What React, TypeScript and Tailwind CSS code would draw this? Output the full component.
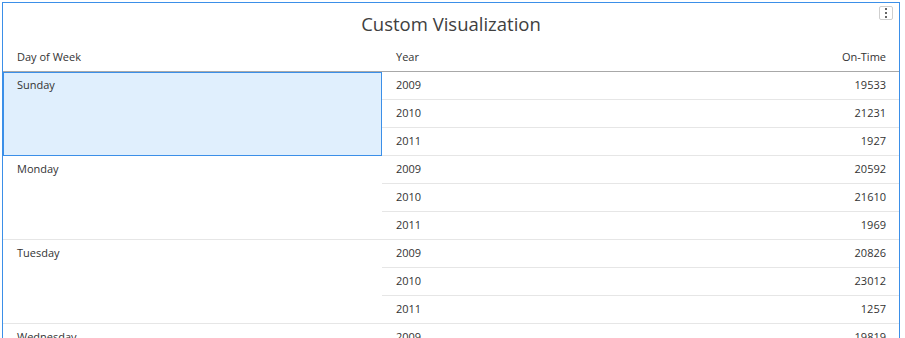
import React from "react";

type Group = { day: string; rows: [string, number][] };

const groups: Group[] = [
  { day: "Sunday", rows: [["2009", 19533], ["2010", 21231], ["2011", 1927]] },
  { day: "Monday", rows: [["2009", 20592], ["2010", 21610], ["2011", 1969]] },
  { day: "Tuesday", rows: [["2009", 20826], ["2010", 23012], ["2011", 1257]] },
  { day: "Wednesday", rows: [["2009", 19819], ["2010", 22141], ["2011", 1893]] },
];

export default function App() {
  return (
    <div className="w-[905px] h-[338px] bg-white overflow-hidden pt-[2px] pl-[2px]" style={{ fontFamily: "'Open Sans', 'Noto Sans', sans-serif" }}>
      <div className="relative w-[898px] h-[340px] border border-[#3b8fe8] bg-white overflow-hidden text-[#333]">
        {/* title */}
        <div className="h-[41px] flex items-center justify-center text-[18.5px] text-[#404040]">
          Custom Visualization
        </div>
        <button className="absolute top-[3px] right-[6px] w-[14px] h-[14px] border border-[#cfcfcf] rounded-[2px] bg-white flex flex-col items-center justify-center gap-[2px]">
          <span className="w-[2px] h-[2px] bg-[#666]" />
          <span className="w-[2px] h-[2px] bg-[#666]" />
          <span className="w-[2px] h-[2px] bg-[#666]" />
        </button>

        {/* header */}
        <div className="flex h-[28px] border-b border-[#a8a8a8] text-[11px] font-medium text-[#333]">
          <div className="w-[379px] pl-[14px] flex items-center">Day of Week</div>
          <div className="flex-1 pl-[14px] flex items-center">Year</div>
          <div className="pr-[13px] flex items-center">On-Time</div>
        </div>

        {/* body */}
        {groups.map((g, gi) => (
          <div key={g.day} className="flex text-[11px]">
            <div
              className={
                gi === 0
                  ? "w-[379px] h-[84px] border border-[#3b8fe8] bg-[#e0effd] pl-[13px] leading-[24px]"
                  : "w-[379px] h-[84px] border-b border-[#e6e6e6] pl-[14px] leading-[26px]"
              }
            >
              {g.day}
            </div>
            <div className="flex-1 flex flex-col">
              {g.rows.map(([year, val]) => (
                <div key={year} className="h-[28px] border-b border-[#e6e6e6] flex items-center justify-between pl-[14px] pr-[13px]">
                  <span>{year}</span>
                  <span>{val}</span>
                </div>
              ))}
            </div>
          </div>
        ))}
      </div>
    </div>
  );
}
